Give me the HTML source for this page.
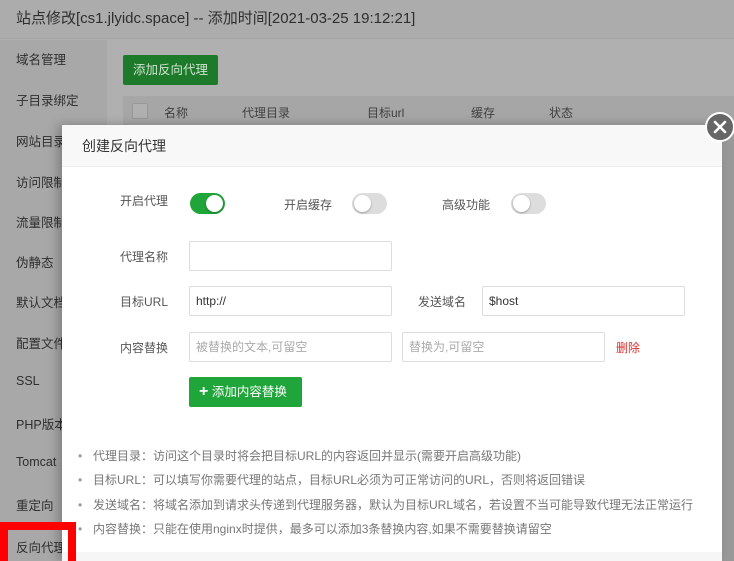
<!DOCTYPE html>
<html><head><meta charset="utf-8"><style>
*{margin:0;padding:0;box-sizing:border-box}
html,body{width:734px;height:561px;overflow:hidden}
body{position:relative;background:#b0b0b0;font-family:"Liberation Sans","Noto Sans CJK SC",sans-serif;color:#333}
.abs{position:absolute}
.top{left:0;top:0;width:734px;height:39px;background:#acacac;border-bottom:1px solid #a6a6a6;font-size:15px;color:#2e2e2e;line-height:38px;padding-left:16px}
.side{left:0;top:40px;width:107px;height:521px;background:#a8a8a8}
.side div{position:absolute;left:16px;font-size:12.5px;color:#2e2e2e}
.btn1{left:123px;top:55px;width:95px;height:30px;background:#1d7a2b;border-radius:2px;color:#cfe3cf;font-size:12.5px;line-height:30px;text-align:center}
.th{left:123px;top:96px;width:611px;height:30px;background:#a6a6a6;font-size:12px;color:#404040}
.th span{position:absolute;top:8px}
.modal{left:62px;top:125px;width:660px;height:436px;background:#fff;box-shadow:-4px 0 10px rgba(0,0,0,.25)}
.mh{position:absolute;left:0;top:0;width:660px;height:42px;background:#f8f8f8;border-bottom:1px solid #eee;font-size:14px;line-height:42px;padding-left:20px;color:#333}
.lbl{position:absolute;font-size:12px;color:#555;text-align:right;width:80px}
.inp{position:absolute;height:30px;border:1px solid #ddd;border-radius:2px;font-size:12px;line-height:28px;padding-left:6px;color:#333}
.ph{color:#aaa}
.tg{position:absolute;width:35px;height:21px;border-radius:11px;background:#ddd}
.tg i{position:absolute;top:2px;width:17px;height:17px;border-radius:50%;background:#fff;box-shadow:0 1px 2px rgba(0,0,0,.3)}
.notes{position:absolute;left:16px;top:319px;font-size:12px;color:#777;line-height:24.3px;list-style:none}
.notes li:before{content:"•";color:#999;display:inline-block;width:15px}
</style></head><body>
<div class="abs top">站点修改[cs1.jlyidc.space] -- 添加时间[2021-03-25 19:12:21]</div>
<div class="abs side">
<div style="top:9px">域名管理</div><div style="top:50px">子目录绑定</div><div style="top:91px">网站目录</div><div style="top:132px">访问限制</div><div style="top:172px">流量限制</div><div style="top:212px">伪静态</div><div style="top:252px">默认文档</div><div style="top:293px">配置文件</div><div style="top:334px">SSL</div><div style="top:374px">PHP版本</div><div style="top:415px">Tomcat</div><div style="top:455px">重定向</div><div style="top:497px">反向代理</div>
</div>
<div class="abs btn1">添加反向代理</div>
<div class="abs th"><span style="left:9px;top:7px;width:16px;height:16px;border:1px solid #999;border-radius:2px;background:#b0b0b0"></span><span style="left:41px">名称</span><span style="left:119px">代理目录</span><span style="left:244px">目标url</span><span style="left:348px">缓存</span><span style="left:426px">状态</span></div>
<div class="abs" style="left:722px;top:126px;width:12px;height:435px;background:#999"></div>
<div class="abs modal">
<div class="mh">创建反向代理</div>
<div class="lbl" style="left:26px;top:67px">开启代理</div>
<div class="tg" style="left:128px;top:68px;background:#20a53a"><i style="left:16px"></i></div>
<div class="lbl" style="left:190px;top:71px">开启缓存</div>
<div class="tg" style="left:290px;top:68px"><i style="left:2px"></i></div>
<div class="lbl" style="left:348px;top:71px">高级功能</div>
<div class="tg" style="left:449px;top:68px"><i style="left:2px"></i></div>
<div class="lbl" style="left:26px;top:123px">代理名称</div>
<div class="inp" style="left:127px;top:116px;width:203px"></div>
<div class="lbl" style="left:26px;top:168px">目标URL</div>
<div class="inp" style="left:127px;top:161px;width:203px">http://</div>
<div class="lbl" style="left:324px;top:168px">发送域名</div>
<div class="inp" style="left:420px;top:161px;width:203px">$host</div>
<div class="lbl" style="left:26px;top:214px">内容替换</div>
<div class="inp ph" style="left:127px;top:207px;width:203px">被替换的文本,可留空</div>
<div class="inp ph" style="left:340px;top:207px;width:203px">替换为,可留空</div>
<div style="position:absolute;left:554px;top:214px;font-size:12px;color:#d9302b">删除</div>
<div style="position:absolute;left:127px;top:252px;width:113px;height:30px;background:#20a53a;border-radius:2px;color:#fff;font-size:12.5px;line-height:30px;padding-left:10px"><b style="font-size:16px">+</b> 添加内容替换</div>
<ul class="notes">
<li>代理目录：访问这个目录时将会把目标URL的内容返回并显示(需要开启高级功能)</li>
<li>目标URL：可以填写你需要代理的站点，目标URL必须为可正常访问的URL，否则将返回错误</li>
<li>发送域名：将域名添加到请求头传递到代理服务器，默认为目标URL域名，若设置不当可能导致代理无法正常运行</li>
<li>内容替换：只能在使用nginx时提供，最多可以添加3条替换内容,如果不需要替换请留空</li>
</ul>
<div style="position:absolute;left:0;top:427px;width:660px;height:9px;background:#f5f6f5"></div>
</div>
<div class="abs" style="left:705px;top:112px;width:30px;height:30px;border-radius:50%;background:#666;border:2px solid #fff"><svg width="26" height="26" viewBox="0 0 26 26" style="position:absolute;left:0;top:0"><path d="M8 8L18 18M18 8L8 18" stroke="#fff" stroke-width="2.6" stroke-linecap="round"/></svg></div>
<div class="abs" style="left:0;top:522px;width:76px;height:40px;border:8px solid #f00;border-bottom:none"></div>
</body></html>
